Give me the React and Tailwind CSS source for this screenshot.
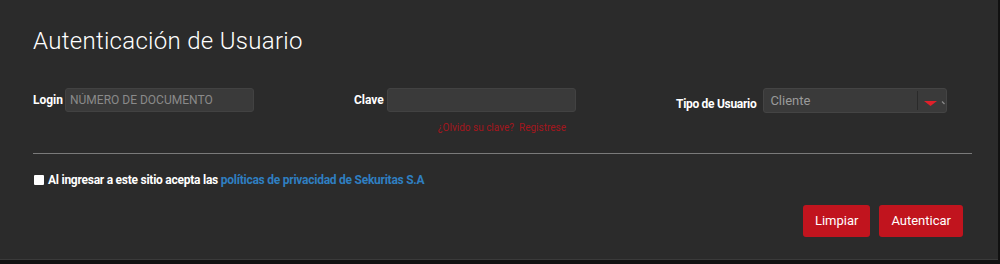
export default function App() {
  return (
    <div className="w-[1000px] h-[264px] bg-[#111] overflow-hidden" style={{ fontFamily: 'Roboto, "Liberation Sans", sans-serif' }}>
      <div className="h-[260px] w-[998px] bg-[#2b2b2b] border-b border-[#3a3a3a] px-[33px]">
        {/* Title */}
        <h1 className="pt-[27px] text-[24px] leading-[29px] font-light text-white tracking-[0.3px]">Autenticación de Usuario</h1>

        {/* Fields */}
        <div className="mt-[32px] flex items-start">
          <div className="w-[321px] flex items-center">
            <label className="text-[12px] font-bold text-white mr-[2px]">Login</label>
            <input
              type="text"
              placeholder="NÚMERO DE DOCUMENTO"
              className="w-[189px] h-[24px] rounded-[3px] bg-[#3a3a3a] border border-[#424242] px-[4px] text-[12px] text-white placeholder:text-[#8a8a8a] outline-none"
            />
          </div>

          <div className="w-[322px]">
            <div className="flex items-center">
              <label className="text-[12px] font-bold text-white mr-[3px]">Clave</label>
              <input
                type="password"
                className="w-[189px] h-[24px] rounded-[3px] bg-[#3a3a3a] border border-[#424242] px-[4px] text-[12px] text-white outline-none"
              />
            </div>
            <div className="mt-[10px] w-[212px] text-right text-[10px] leading-[12px] text-[#a3161d]">
              <a href="#">¿Olvido su clave?</a>
              <a href="#" className="ml-[5px]">Registrese</a>
            </div>
          </div>

          <div className="flex items-center">
            <label className="text-[12px] font-bold text-white tracking-[-0.3px] mr-[7px] mt-[6px]">Tipo de Usuario</label>
            <div className="relative w-[184px] h-[25px] rounded-[3px] bg-[#3a3a3a] border border-[#444] flex items-center overflow-hidden">
              <span className="pl-[6px] text-[13px] text-[#9a9a9a] flex-1">Cliente</span>
              <div className="w-px h-[19px] bg-[#2a2a2a]" />
              <svg width="28" height="20" viewBox="0 0 28 20" className="shrink-0">
                <path d="M6 10 L19 10 L12.5 15 Z" fill="#e0202a" />
                <path d="M24 10.5 L26.5 13" stroke="#8a8a8a" strokeWidth="1.2" />
              </svg>
            </div>
          </div>
        </div>

        {/* Divider */}
        <div className="mt-[19px] w-[939px] h-px bg-[#7a7a7a]" />

        {/* Terms */}
        <div className="mt-[17px] flex items-center">
          <span className="w-[10px] h-[10px] bg-white rounded-[1px] ml-[1px] mr-[4px]" />
          <span className="text-[12px] font-bold text-white tracking-[-0.25px]">
            Al ingresar a este sitio acepta las{' '}
            <a href="#" className="text-[#2f7fc1]">políticas de privacidad de Sekuritas S.A</a>
          </span>
        </div>

        {/* Buttons */}
        <div className="mt-[16px] w-[930px] flex justify-end gap-[9px]">
          <button className="h-[32px] px-[12px] rounded-[3px] bg-[#c1141e] text-white text-[13px]">Limpiar</button>
          <button className="h-[32px] px-[12px] rounded-[3px] bg-[#c1141e] text-white text-[13px]">Autenticar</button>
        </div>
      </div>
    </div>
  )
}
